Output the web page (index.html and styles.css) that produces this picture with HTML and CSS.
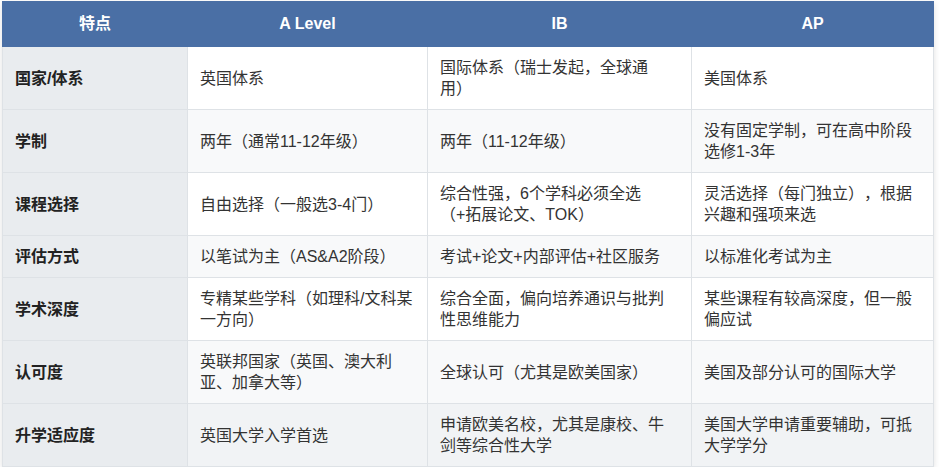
FILE: index.html
```html
<!DOCTYPE html>
<html lang="zh-CN">
<head>
<meta charset="utf-8">
<title>A Level / IB / AP 对比</title>
<link rel="stylesheet" href="styles.css">
</head>
<body>
<div class="page">
<table class="compare">
  <colgroup>
    <col class="c1"><col class="c2"><col class="c3"><col class="c4">
  </colgroup>
  <thead>
    <tr><th>特点</th><th>A Level</th><th>IB</th><th>AP</th></tr>
  </thead>
  <tbody>
    <tr><td class="feat">国家/体系</td><td>英国体系</td><td>国际体系（瑞士发起，全球通用）</td><td>美国体系</td></tr>
    <tr><td class="feat">学制</td><td>两年（通常11-12年级）</td><td>两年（11-12年级）</td><td>没有固定学制，可在高中阶段选修1-3年</td></tr>
    <tr><td class="feat">课程选择</td><td>自由选择（一般选3-4门）</td><td>综合性强，6个学科必须全选（+拓展论文、TOK）</td><td>灵活选择（每门独立），根据兴趣和强项来选</td></tr>
    <tr><td class="feat">评估方式</td><td>以笔试为主（AS&amp;A2阶段）</td><td>考试+论文+内部评估+社区服务</td><td>以标准化考试为主</td></tr>
    <tr><td class="feat">学术深度</td><td>专精某些学科（如理科/文科某一方向）</td><td>综合全面，偏向培养通识与批判性思维能力</td><td>某些课程有较高深度，但一般偏应试</td></tr>
    <tr><td class="feat">认可度</td><td>英联邦国家（英国、澳大利亚、加拿大等）</td><td>全球认可（尤其是欧美国家）</td><td>美国及部分认可的国际大学</td></tr>
    <tr class="is-hover"><td class="feat">升学适应度</td><td>英国大学入学首选</td><td>申请欧美名校，尤其是康校、牛剑等综合性大学</td><td>美国大学申请重要辅助，可抵大学学分</td></tr>
  </tbody>
</table>
</div>
</body>
</html>
```
FILE: styles.css
```css
html, body {
  margin: 0;
  padding: 0;
  background: #ffffff;
}
.page {
  padding: 1px 6px 0 2px;
}
.compare {
  width: 931px;
  table-layout: fixed;
  border-collapse: collapse;
  font-family: "Liberation Sans", "Noto Sans CJK SC", sans-serif;
  font-size: 16px;
  line-height: 21px;
  color: #333333;
  text-spacing-trim: space-all;
  box-shadow: 0 2px 6px rgba(0, 0, 0, 0.12);
}
.c1 { width: 185px; }
.c2 { width: 240px; }
.c3 { width: 264px; }
.c4 { width: 242px; }
.compare th {
  background: #4a6fa5;
  color: #ffffff;
  font-weight: bold;
  text-align: center;
  padding: 11px 12px 12px;
  border: 1px solid #4a6fa5;
}
.compare td {
  padding: 10px 12px;
  border: 1px solid #dee2e6;
  vertical-align: middle;
  text-align: left;
}
.compare tbody tr:nth-child(even) td {
  background: #f8f9fa;
}
.compare tbody tr.is-hover td {
  background: #f1f3f5;
}
.compare td.feat,
.compare tbody tr:nth-child(even) td.feat,
.compare tbody tr.is-hover td.feat {
  background: #e9ecef;
  font-weight: bold;
  color: #222222;
}
```
